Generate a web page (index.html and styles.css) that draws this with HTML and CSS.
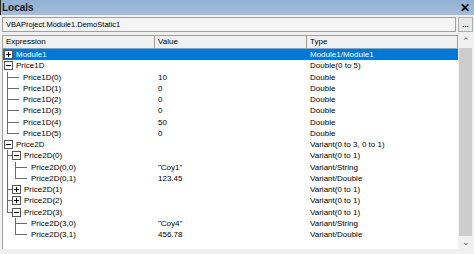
FILE: index.html
```html
<!DOCTYPE html>
<html lang="en">
<head>
    <meta charset="UTF-8">
    <meta name="viewport" content="width=device-width, initial-scale=1.0">
    <title>Locals</title>
    <link rel="stylesheet" href="styles.css">
</head>
<body>
    <div class="window">
        <div class="titlebar">
            <span class="title">Locals</span>
            <span class="close">&#x2715;</span>
        </div>
        <div class="context">
            <div class="combo">VBAProject.Module1.DemoStatic1</div>
            <div class="dots">...</div>
        </div>
        <div class="listarea">
            <div class="list">
                <div class="header">
                    <div class="hcell">Expression</div>
                    <div class="hcell">Value</div>
                    <div class="hcell">Type</div>
                </div>
                <div class="rows">
                    <div class="row selected">
                        <div class="cell tree"><span class="box plus"></span><span class="name">Module1</span></div>
                        <div class="cell"></div>
                        <div class="cell">Module1/Module1</div>
                    </div>
                    <div class="row">
                        <div class="cell tree"><span class="box minus"></span><span class="name">Price1D</span></div>
                        <div class="cell"></div>
                        <div class="cell">Double(0 to 5)</div>
                    </div>
                    <div class="row">
                        <div class="cell tree"><span class="g tee"></span><span class="g stub"></span><span class="name">Price1D(0)</span></div>
                        <div class="cell">10</div>
                        <div class="cell">Double</div>
                    </div>
                    <div class="row">
                        <div class="cell tree"><span class="g tee"></span><span class="g stub"></span><span class="name">Price1D(1)</span></div>
                        <div class="cell">0</div>
                        <div class="cell">Double</div>
                    </div>
                    <div class="row">
                        <div class="cell tree"><span class="g tee"></span><span class="g stub"></span><span class="name">Price1D(2)</span></div>
                        <div class="cell">0</div>
                        <div class="cell">Double</div>
                    </div>
                    <div class="row">
                        <div class="cell tree"><span class="g tee"></span><span class="g stub"></span><span class="name">Price1D(3)</span></div>
                        <div class="cell">0</div>
                        <div class="cell">Double</div>
                    </div>
                    <div class="row">
                        <div class="cell tree"><span class="g tee"></span><span class="g stub"></span><span class="name">Price1D(4)</span></div>
                        <div class="cell">50</div>
                        <div class="cell">Double</div>
                    </div>
                    <div class="row">
                        <div class="cell tree"><span class="g ell"></span><span class="g stub"></span><span class="name">Price1D(5)</span></div>
                        <div class="cell">0</div>
                        <div class="cell">Double</div>
                    </div>
                    <div class="row">
                        <div class="cell tree"><span class="box minus"></span><span class="name">Price2D</span></div>
                        <div class="cell"></div>
                        <div class="cell">Variant(0 to 3, 0 to 1)</div>
                    </div>
                    <div class="row">
                        <div class="cell tree"><span class="g tee"></span><span class="box minus"></span><span class="name">Price2D(0)</span></div>
                        <div class="cell"></div>
                        <div class="cell">Variant(0 to 1)</div>
                    </div>
                    <div class="row">
                        <div class="cell tree"><span class="g vert"></span><span class="g tee"></span><span class="g stub"></span><span class="name">Price2D(0,0)</span></div>
                        <div class="cell">"Coy1"</div>
                        <div class="cell">Variant/String</div>
                    </div>
                    <div class="row">
                        <div class="cell tree"><span class="g vert"></span><span class="g ell"></span><span class="g stub"></span><span class="name">Price2D(0,1)</span></div>
                        <div class="cell">123.45</div>
                        <div class="cell">Variant/Double</div>
                    </div>
                    <div class="row">
                        <div class="cell tree"><span class="g tee"></span><span class="box plus"></span><span class="name">Price2D(1)</span></div>
                        <div class="cell"></div>
                        <div class="cell">Variant(0 to 1)</div>
                    </div>
                    <div class="row">
                        <div class="cell tree"><span class="g tee"></span><span class="box plus"></span><span class="name">Price2D(2)</span></div>
                        <div class="cell"></div>
                        <div class="cell">Variant(0 to 1)</div>
                    </div>
                    <div class="row">
                        <div class="cell tree"><span class="g ell"></span><span class="box minus"></span><span class="name">Price2D(3)</span></div>
                        <div class="cell"></div>
                        <div class="cell">Variant(0 to 1)</div>
                    </div>
                    <div class="row">
                        <div class="cell tree"><span class="g"></span><span class="g tee"></span><span class="g stub"></span><span class="name">Price2D(3,0)</span></div>
                        <div class="cell">"Coy4"</div>
                        <div class="cell">Variant/String</div>
                    </div>
                    <div class="row">
                        <div class="cell tree"><span class="g"></span><span class="g ell"></span><span class="g stub"></span><span class="name">Price2D(3,1)</span></div>
                        <div class="cell">456.78</div>
                        <div class="cell">Variant/Double</div>
                    </div>
                </div>
            </div>
            <div class="scrollbar">
                <div class="arrow">&#x2303;</div>
                <div class="thumb"></div>
                <div class="arrow">&#x2304;</div>
            </div>
        </div>
    </div>
</body>
</html>
```

FILE: styles.css
```css
body {
    margin: 0;
    font-family: "Liberation Sans", Arial, sans-serif;
    font-size: 8px;
    background-color: #f0f0f0;
}

.window {
    width: 474px;
    height: 254px;
    display: flex;
    flex-direction: column;
    background-color: #f0f0f0;
    overflow: hidden;
}

.titlebar {
    height: 15px;
    display: flex;
    align-items: center;
    justify-content: space-between;
    background: linear-gradient(#93b1d2, #a3bdd9);
    border-left: 1px solid #2b2b2b;
    padding: 0 4px 0 1px;
}

.title {
    font-size: 10px;
    font-weight: bold;
    color: #1a1a1a;
}

.close {
    font-size: 12px;
    font-weight: bold;
    color: #000;
}

.context {
    display: flex;
    gap: 2px;
    padding: 2px 1px 0 2px;
    height: 15px;
}

.combo {
    flex: 1;
    border: 1px solid #a0a0a0;
    background-color: #f4f4f4;
    padding-left: 3px;
    display: flex;
    align-items: center;
    font-size: 7.5px;
}

.dots {
    width: 13px;
    border: 1px solid #adadad;
    background-color: #e8e8e8;
    font-weight: bold;
    text-align: center;
    line-height: 13px;
}

.listarea {
    display: flex;
    margin: 3px 1px 0 2px;
    height: 214px;
    background-color: #fff;
    border-left: 1px solid #a0a0a0;
}

.list {
    flex: 1;
    display: flex;
    flex-direction: column;
}

.header {
    display: grid;
    grid-template-columns: 152px 152px 1fr;
    height: 13px;
    background-color: #f0f0f0;
    border-top: 1px solid #a0a0a0;
}

.hcell {
    border-right: 1px solid #a0a0a0;
    border-bottom: 1px solid #a0a0a0;
    padding-left: 3px;
    line-height: 12px;
}

.rows {
    display: flex;
    flex-direction: column;
}

.row {
    display: grid;
    grid-template-columns: 152px 152px 1fr;
    height: 11.25px;
    line-height: 11.25px;
    color: #000;
}

.row.selected {
    background-color: #0078d7;
    color: #fff;
}

.cell {
    padding-left: 3px;
    white-space: nowrap;
}

.tree {
    display: flex;
    align-items: stretch;
    padding-left: 1px;
}

.name {
    margin-left: 3px;
}

.g {
    width: 8px;
    flex: none;
    position: relative;
}

.g.tee::before,
.g.vert::before {
    content: "";
    position: absolute;
    left: 3px;
    top: 0;
    bottom: 0;
    border-left: 1px solid #6a6a6a;
}

.g.ell::before {
    content: "";
    position: absolute;
    left: 3px;
    top: 0;
    height: 6px;
    border-left: 1px solid #6a6a6a;
}

.g.tee::after,
.g.ell::after {
    content: "";
    position: absolute;
    left: 4px;
    right: 0;
    top: 5px;
    border-top: 1px solid #6a6a6a;
}

.g.stub::before {
    content: "";
    position: absolute;
    left: 0;
    right: 1px;
    top: 5px;
    border-top: 1px solid #6a6a6a;
}

.box {
    width: 7px;
    height: 7px;
    flex: none;
    align-self: center;
    border: 1px solid #555;
    background-color: #fff;
    position: relative;
}

.box::before {
    content: "";
    position: absolute;
    left: 1px;
    right: 1px;
    top: 3px;
    border-top: 1px solid #000;
}

.box.plus::after {
    content: "";
    position: absolute;
    top: 1px;
    bottom: 1px;
    left: 3px;
    border-left: 1px solid #000;
}

.scrollbar {
    width: 15px;
    display: flex;
    flex-direction: column;
    background-color: #f0f0f0;
}

.arrow {
    height: 13px;
    text-align: center;
    color: #606060;
    font-size: 9px;
    line-height: 13px;
}

.thumb {
    flex: 1;
    margin: 0 1px;
    background-color: #cdcdcd;
}
```
